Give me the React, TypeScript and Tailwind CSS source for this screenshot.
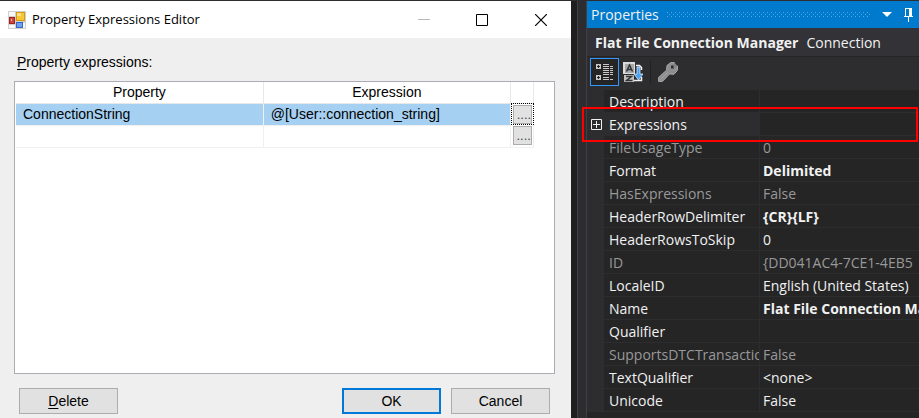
import React from 'react';

interface PropertyItem {
  name: string;
  value: string;
  readOnly?: boolean;
  bold?: boolean;
  selected?: boolean;
}

const properties: PropertyItem[] = [
  { name: 'Description', value: '' },
  { name: 'Expressions', value: '', selected: true },
  { name: 'FileUsageType', value: '0', readOnly: true },
  { name: 'Format', value: 'Delimited', bold: true },
  { name: 'HasExpressions', value: 'False', readOnly: true },
  { name: 'HeaderRowDelimiter', value: '{CR}{LF}', bold: true },
  { name: 'HeaderRowsToSkip', value: '0' },
  { name: 'ID', value: '{DD041AC4-7CE1-4EB5', readOnly: true },
  { name: 'LocaleID', value: 'English (United States)' },
  { name: 'Name', value: 'Flat File Connection Ma', bold: true },
  { name: 'Qualifier', value: '' },
  { name: 'SupportsDTCTransactio', value: 'False', readOnly: true },
  { name: 'TextQualifier', value: '<none>' },
  { name: 'Unicode', value: 'False' },
];

const expressions = [
  { property: 'ConnectionString', expression: '@[User::connection_string]', active: true },
  { property: '', expression: '', active: false },
];

const FormIcon = () => (
  <svg width="18" height="18" viewBox="0 0 18 18" aria-hidden="true">
    <rect width="18" height="18" fill="#d0d0d0" />
    <rect x="1" y="1" width="6" height="4" fill="#f8f8f8" />
    <rect x="1" y="14" width="6" height="3" fill="#f8f8f8" />
    <rect x="15" y="12" width="2" height="5" fill="#f8f8f8" />
    <rect x="8" y="1" width="9" height="9" fill="#d79b12" />
    <rect x="9" y="2" width="7" height="7" fill="#f6c738" />
    <rect x="9" y="2" width="4" height="3" fill="#fde28a" />
    <rect x="1" y="6" width="6" height="7" fill="#a3221c" />
    <rect x="2" y="7" width="4" height="5" fill="#c9473c" />
    <rect x="3" y="8" width="1" height="2" fill="#f2b3a9" />
    <rect x="8" y="11" width="7" height="6" fill="#3569c4" />
    <rect x="9" y="12" width="5" height="4" fill="#6ea0f0" />
  </svg>
);

const CategorizedIcon = () => (
  <svg width="18" height="18" viewBox="0 0 18 18" shapeRendering="crispEdges" aria-hidden="true">
    <path fill="#c8c8c8" d="M0 1h5v5H0zM0 12h5v5H0z" />
    <path fill="#252526" d="M2 2h1v1h1v1H3v1H2V4H1V3h1zM2 13h1v1h1v1H3v1H2v-1H1v-1h1z" />
    <path
      fill="#c8c8c8"
      d="M7 1h6v1H7zM7 3h6v1H7zM7 5h6v1H7zM7 7h6v1H7zM7 9h6v1H7zM7 11h6v1H7zM7 14h6v1H7zM7 16h6v1H7zM14 3h3v1h-3zM14 5h3v1h-3zM14 7h3v1h-3zM14 9h3v1h-3zM14 11h3v1h-3zM14 16h3v1h-3z"
    />
  </svg>
);

const AlphabeticalIcon = () => (
  <svg width="20" height="20" viewBox="0 0 20 20" aria-hidden="true">
    <rect width="12" height="12" fill="#dcdcdc" />
    <rect x="2" y="2" width="9" height="9" fill="#a8a8a8" />
    <path d="M3.500 9.500 6.500 3l3 6.500M4.500 7.500h4" fill="none" stroke="#333" strokeWidth="1.500" />
    <rect x="1" y="13" width="10" height="7" fill="#c0c0c0" />
    <path d="M3 14.500h5.500L3.500 18.500h6" fill="none" stroke="#333" strokeWidth="1.500" />
    <path d="M13 3.500h3.500l2 2V8M11 18.500h7.500V15" fill="none" stroke="#f1f1f1" strokeWidth="1.500" />
    <path d="M14 5h3v7h3l-4.500 6L11 12h3z" fill="#4ba3ef" stroke="#d4eafa" strokeWidth=".8" />
  </svg>
);

const WrenchIcon = () => (
  <svg width="20" height="20" viewBox="0 0 20 20" aria-hidden="true">
    <path
      d="M16.500.7 12.800.5 9 3.500 8.500 8.200.6 15.500V19.400H4.500L11.500 12l4.500.3 3.400-4L19.500 4 15.500 7.500 12.800 5.500 13 3.500z"
      fill="#8e8e8e"
      stroke="#a8a8a8"
    />
    <path d="M16.500.7 19.500 4 16.500 6.500 14 6.500 13 3.500z" fill="#858585" />
    <path d="M13 3.500h2.500v3H13z" fill="#2d2d30" />
    <path d="M2.500 17.500 10 10" stroke="#a0a0a0" />
  </svg>
);

const PinIcon = () => (
  <svg width="9" height="14" viewBox="0 0 9 14" shapeRendering="crispEdges" aria-hidden="true">
    <path fill="#fff" d="M1 0h7v8h1v1H5v5H4V9H0V8h1zM2 1v7h3V1z" fillRule="evenodd" />
  </svg>
);

const ExpressionsDialog: React.FC = () => (
  <section className="flex min-w-0 flex-1 flex-col bg-[#efefef] font-['Liberation_Sans',Arial,sans-serif] text-sm text-black">
    <header className="flex h-[37px] items-center bg-white pl-2 font-['Open_Sans','Segoe_UI',sans-serif]">
      <FormIcon />
      <h1 className="ml-1.5 flex-1 truncate text-[13px]">Property Expressions Editor</h1>
      <div className="flex shrink-0">
        <button aria-label="Minimize" className="flex h-9 w-[58px] items-center justify-center">
          <svg width="12" height="12" viewBox="0 0 12 12"><path d="M0 5.500h12" stroke="#bbb" /></svg>
        </button>
        <button aria-label="Maximize" className="flex h-9 w-[58px] items-center justify-center">
          <svg width="12" height="12" viewBox="0 0 12 12"><path d="M.5.5h11v11H.5z" fill="none" stroke="#000" /></svg>
        </button>
        <button aria-label="Close" className="flex h-9 w-[60px] items-center justify-center">
          <svg width="12" height="12" viewBox="0 0 12 12"><path d="m0 0 12 12M12 0 0 12" stroke="#000" strokeWidth="1.200" /></svg>
        </button>
      </div>
    </header>

    <div className="flex flex-1 flex-col pt-4 pr-4 pb-1 pl-3.5">
      <h2 className="pl-[3px] leading-4">
        <span className="underline underline-offset-2">P</span>roperty expressions:
      </h2>

      <div className="mt-[11px] min-h-[292px] flex-1 border border-[#abadb3] bg-white pr-5 pl-px">
        <table className="w-full table-fixed border-collapse">
          <thead>
            <tr className="h-[21px]">
              <th className="border-r border-b border-[#e8e8e8] p-0 font-normal">Property</th>
              <th className="border-r border-b border-[#e8e8e8] p-0 font-normal">Expression</th>
              <th className="w-[23px] border-r border-b border-[#e8e8e8] p-0" aria-label="Browse" />
            </tr>
          </thead>
          <tbody>
            {expressions.map((row, i) => (
              <tr key={i} className={row.active ? 'h-[22px] bg-[#a6d0f2]' : 'h-[22px]'}>
                <td className="border-r border-b border-[#f0f0f0] p-0 pl-[7px] leading-5">{row.property}</td>
                <td className="border-r border-b border-[#f0f0f0] p-0 pl-[7px] leading-5">{row.expression}</td>
                <td
                  className={
                    row.active
                      ? 'bg-white p-0 outline-1 -outline-offset-1 outline-black outline-dotted'
                      : 'border-r border-b border-[#f0f0f0] p-0'
                  }
                >
                  <button
                    aria-label="Edit expression"
                    className="mx-auto flex h-[19px] w-[19px] items-end overflow-hidden border border-[#adadad] bg-[#e1e1e1] pl-[3px] text-[13px] leading-4 text-[#444444]"
                  >
                    ....
                  </button>
                </td>
              </tr>
            ))}
          </tbody>
        </table>
      </div>

      <div className="mt-3.5 flex gap-2.5 pl-[5px]">
        <button className="mr-auto h-[26px] w-[99px] border border-[#adadad] bg-[#e1e1e1]">
          <span className="underline underline-offset-2">D</span>elete
        </button>
        <button className="h-[26px] w-[99px] border-2 border-[#0078d7] bg-[#e1e1e1]">OK</button>
        <button className="mr-[5px] h-[26px] w-[99px] border border-[#adadad] bg-[#e1e1e1]">Cancel</button>
      </div>
    </div>
  </section>
);

const PropertiesPanel: React.FC = () => (
  <section className="flex w-[332px] shrink-0 flex-col bg-[#2d2d30] font-['Open_Sans','Segoe_UI',sans-serif] text-sm text-[#f1f1f1]">
    <header className="flex h-[27px] items-center bg-[#007acc] pr-1.5 pl-1">
      <h2>Properties</h2>
      <svg className="ml-2 h-[6px] flex-1" aria-hidden="true">
        <defs>
          <pattern id="grip" width="4" height="4" patternUnits="userSpaceOnUse">
            <path d="M0 0h1v1H0zM2 2h1v1H2z" fill="#59a8de" />
          </pattern>
        </defs>
        <rect width="100%" height="6" fill="url(#grip)" />
      </svg>
      <button aria-label="Window position" className="ml-3">
        <svg width="10" height="5" viewBox="0 0 10 5"><path d="M0 0h10L5 5z" fill="#fff" /></svg>
      </button>
      <button aria-label="Auto hide" className="ml-3">
        <PinIcon />
      </button>
    </header>

    <p className="h-7 truncate bg-[#333337] pl-2 leading-[29px]">
      <strong className="mr-2 font-bold">Flat File Connection Manager</strong>
      Connection
    </p>

    <div className="flex h-[34px] items-center border-t border-[#252526] pb-1 pl-[3px]">
      <button aria-label="Categorized" className="flex h-7 w-[29px] items-center justify-center border border-[#3399ff] bg-[#252526]">
        <CategorizedIcon />
      </button>
      <button aria-label="Alphabetical" className="flex h-7 w-7 items-center justify-center">
        <AlphabeticalIcon />
      </button>
      <span className="mx-[3px] h-6 w-px bg-[#222224]" />
      <button aria-label="Property pages" className="flex h-7 w-7 items-center justify-center">
        <WrenchIcon />
      </button>
    </div>

    <dl>
      {properties.map(item => (
        <div
          key={item.name}
          className={item.readOnly ? 'relative flex h-[23px] text-[#999999]' : 'relative flex h-[23px]'}
        >
          <div className="flex w-[17px] shrink-0 items-center justify-end pr-0.5">
            {item.selected && (
              <svg width="11" height="11" viewBox="0 0 11 11" aria-hidden="true">
                <path d="M.5.5h10v10H.5zM2 5.500h7M5.500 2v7" fill="none" stroke="#f1f1f1" />
              </svg>
            )}
          </div>
          <dt
            className={
              item.selected
                ? 'w-[156px] shrink-0 overflow-hidden border-r border-b border-[#2d2d30] bg-[#2d2d30] pl-[5px] leading-6 whitespace-nowrap'
                : 'w-[156px] shrink-0 overflow-hidden border-r border-b border-[#2d2d30] bg-[#252526] pl-[5px] leading-6 whitespace-nowrap'
            }
          >
            {item.name}
          </dt>
          <dd
            className={
              item.bold
                ? 'min-w-0 flex-1 overflow-hidden border-b border-[#2d2d30] bg-[#252526] pl-[3px] leading-6 font-bold whitespace-nowrap'
                : 'min-w-0 flex-1 overflow-hidden border-b border-[#2d2d30] bg-[#252526] pl-[3px] leading-6 whitespace-nowrap'
            }
          >
            {item.value}
          </dd>
          {item.selected && (
            <div className="pointer-events-none absolute -inset-y-1.5 right-px -left-[5px] z-10 border-2 border-[#ff0000]" />
          )}
        </div>
      ))}
    </dl>
    <div className="flex-1 bg-[#252526]" />
  </section>
);

export default function App() {
  return (
    <main className="flex min-h-screen border-t border-[#2d2d30] bg-[#1f1f20]">
      <ExpressionsDialog />
      <div className="ml-1.5 w-2.5 shrink-0 border-x border-[#3f3f46] bg-[#2d2d30]" />
      <PropertiesPanel />
    </main>
  );
}
